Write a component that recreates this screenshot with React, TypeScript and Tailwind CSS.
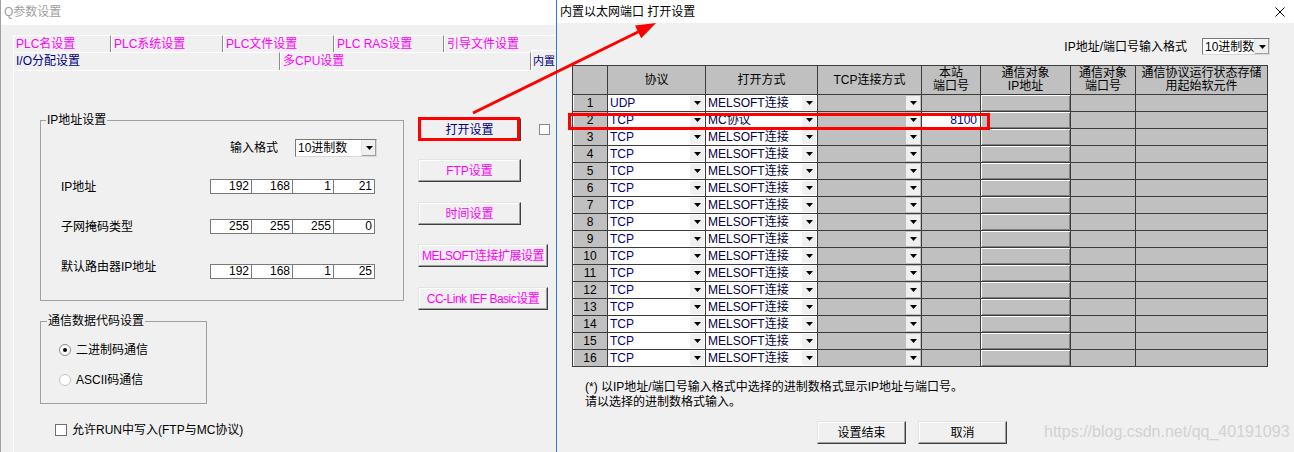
import React from "react";

// small black down-pointing triangle used by every combo box
function Caret() {
  return (
    <svg width="7" height="4" viewBox="0 0 7 4" className="block">
      <polygon points="0,0 7,0 3.5,4" fill="#000000" />
    </svg>
  );
}

function DropBtn() {
  return (
    <div className="mr-[1px] flex h-[14px] w-[14px] shrink-0 items-center justify-center bg-[#f0f0f0]">
      <Caret />
    </div>
  );
}

function Combo({ text, className }: { text: string; className: string }) {
  return (
    <div className={`flex items-center justify-between overflow-hidden whitespace-nowrap border border-[#7a7a7a] border-b-[#d8d8d8] border-r-[#d8d8d8] bg-white ${className}`}>
      <span className="pl-[2px] leading-[14px]">{text}</span>
      <div className="flex h-full w-[15px] shrink-0 items-center justify-center border-l border-[#e3e3e3] bg-[#f0f0f0] shadow-[inset_-1px_-1px_0_#a0a0a0]">
        <Caret />
      </div>
    </div>
  );
}

function WinButton({ label, wide, navy }: { label: string; wide?: boolean; navy?: boolean }) {
  return (
    <div
      className={`flex h-[23px] items-center justify-center whitespace-nowrap border border-[#e3e3e3] border-b-[#404040] border-r-[#404040] bg-[#f0f0f0] shadow-[inset_-1px_-1px_0_#a0a0a0,inset_1px_1px_0_#ffffff] ${
        wide ? "w-[130px] tracking-[-0.5px]" : "w-[103px]"
      } ${navy ? "text-[#000080]" : "text-[#ff00ff]"}`}
    >
      {label}
    </div>
  );
}

function IpBox({ parts }: { parts: string[] }) {
  return (
    <div className="flex h-[15px] w-[165px] border border-[#7a7a7a] bg-white">
      {parts.map((p, i) => (
        <div
          key={i}
          className={`pr-[2px] text-right leading-[13px] ${i > 0 ? "w-[41px] border-l border-[#7a7a7a]" : "w-[40px]"}`}
        >
          {p}
        </div>
      ))}
    </div>
  );
}

function CheckBox() {
  return <div className="h-[12px] w-[12px] shrink-0 border border-[#707070] bg-white" />;
}

function Radio({ checked }: { checked?: boolean }) {
  return (
    <div
      className={`flex h-[12px] w-[12px] shrink-0 items-center justify-center rounded-full border bg-white ${
        checked ? "border-[#8a8a8a]" : "border-[#c4c4c4]"
      }`}
    >
      {checked && <div className="h-[4px] w-[4px] rounded-full bg-black" />}
    </div>
  );
}

const tabsTop = [
  { label: "PLC名设置", w: "w-[98px]" },
  { label: "PLC系统设置", w: "w-[112px]" },
  { label: "PLC文件设置", w: "w-[111px]" },
  { label: "PLC RAS设置", w: "w-[110px]" },
  { label: "引导文件设置", w: "w-[120px]" },
];

const headers = [
  [""],
  ["协议"],
  ["打开方式"],
  ["TCP连接方式"],
  ["本站", "端口号"],
  ["通信对象", "IP地址"],
  ["通信对象", "端口号"],
  ["通信协议运行状态存储", "用起始软元件"],
];

const rows = Array.from({ length: 16 }, (_, i) => ({
  n: i + 1,
  proto: i === 0 ? "UDP" : "TCP",
  open: i === 1 ? "MC协议" : "MELSOFT连接",
  port: i === 1 ? "8100" : "",
}));

function LeftWindow() {
  return (
    <div className="flex h-full w-[556px] shrink-0 flex-col overflow-hidden border-l border-[#a0a0a0]">
      <div className="h-[25px] bg-white pl-[3px] pt-[5px] text-[#a0a0a0]">Q参数设置</div>

      <div className="flex flex-1 flex-col pl-[12px] pt-[10px]">
        {/* tab rows */}
        <div className="flex h-[17px]">
          {tabsTop.map((t) => (
            <div
              key={t.label}
              className={`${t.w} h-full shrink-0 whitespace-nowrap border-l border-r border-t border-white border-r-[#8c8c8c] pl-[2px] leading-[16px] text-[#ff00ff]`}
            >
              {t.label}
            </div>
          ))}
        </div>
        <div className="flex h-[18px]">
          <div className="h-full w-[267px] shrink-0 border-l border-r border-t border-white border-r-[#8c8c8c] pl-[2px] leading-[17px] text-[#000080]">
            I/O分配设置
          </div>
          <div className="h-full w-[251px] shrink-0 border-l border-r border-t border-white border-r-[#8c8c8c] pl-[2px] leading-[17px] text-[#ff00ff]">
            多CPU设置
          </div>
          <div className="relative z-10 -mt-[2px] h-[21px] w-[25px] shrink-0 whitespace-nowrap border-l border-t border-white bg-[#f0f0f0] pl-[1px] pt-[3px] text-[11px] text-[#000080]">
            内置
          </div>
        </div>

        {/* tab page */}
        <div className="flex flex-1 border-l border-t border-white">
          <div className="flex w-[390px] shrink-0 flex-col pl-[26px]">
            <fieldset className="mt-[42px] h-[188px] w-[364px] border border-[#a0a0a0]">
              <legend className="ml-[5px] px-[1px] leading-[14px]">IP地址设置</legend>
              <div className="mt-[12px] flex h-[18px] items-center pl-[189px]">
                <span className="w-[65px]">输入格式</span>
                <Combo text="10进制数" className="h-[18px] w-[82px]" />
              </div>
              <div className="mt-[21px] flex items-center pl-[20px]">
                <span className="w-[149px] pt-[2px]">IP地址</span>
                <IpBox parts={["192", "168", "1", "21"]} />
              </div>
              <div className="mt-[25px] flex items-center pl-[20px]">
                <span className="w-[149px] pt-[1px]">子网掩码类型</span>
                <IpBox parts={["255", "255", "255", "0"]} />
              </div>
              <div className="mt-[26px] flex items-center pl-[20px]">
                <span className="mb-[8px] w-[149px]">默认路由器IP地址</span>
                <IpBox parts={["192", "168", "1", "25"]} />
              </div>
            </fieldset>

            <fieldset className="mt-[13px] h-[90px] w-[167px] border border-[#a0a0a0]">
              <legend className="ml-[6px] px-[1px] leading-[14px]">通信数据代码设置</legend>
              <div className="mt-[15px] flex h-[14px] items-center gap-[5px] pl-[18px]">
                <Radio checked />
                <span>二进制码通信</span>
              </div>
              <div className="mt-[16px] flex h-[14px] items-center gap-[5px] pl-[18px]">
                <Radio />
                <span>ASCII码通信</span>
              </div>
            </fieldset>

            <div className="ml-[15px] mt-[19px] flex h-[14px] items-center gap-[5px]">
              <CheckBox />
              <span>允许RUN中写入(FTP与MC协议)</span>
            </div>
          </div>

          <div className="ml-[14px] flex flex-col pt-[47px]">
            <div className="flex items-center">
              <WinButton label="打开设置" navy />
              <div className="ml-[18px] h-[11px] w-[11px] border border-[#8a8a8a] bg-white" />
            </div>
            <div className="mt-[18px]">
              <WinButton label="FTP设置" />
            </div>
            <div className="mt-[20px]">
              <WinButton label="时间设置" />
            </div>
            <div className="mt-[19px]">
              <WinButton label="MELSOFT连接扩展设置" wide />
            </div>
            <div className="mt-[20px]">
              <WinButton label="CC-Link IEF Basic设置" wide />
            </div>
          </div>
        </div>
      </div>
    </div>
  );
}

function OpenSettingsDialog() {
  return (
    <div className="flex h-full flex-1 flex-col border-l border-[#2b7bd1] bg-[#f0f0f0]">
      <div className="flex h-[23px] items-center justify-between bg-white pl-[3px] pr-[9px]">
        <span>内置以太网端口 打开设置</span>
        <svg width="10" height="10" viewBox="0 0 10 10">
          <path d="M0.5 0.5 L9.5 9.5 M9.5 0.5 L0.5 9.5" stroke="#000000" strokeWidth="1" />
        </svg>
      </div>

      <div className="mt-[15px] flex items-center justify-end pr-[24px]">
        <span className="mr-[15px]">IP地址/端口号输入格式</span>
        <Combo text="10进制数" className="h-[17px] w-[68px]" />
      </div>

      <div className="ml-[15px] mt-[10px] grid w-[696px] grid-cols-[34px_97px_111px_103px_58px_89px_64px_131px] grid-rows-[28px_repeat(16,16px)] gap-px border border-[#3c3c3c] bg-[#3c3c3c]">
        {headers.map((h, i) => (
          <div key={i} className="flex flex-col items-center justify-center bg-[#c0c0c0] text-center leading-[13px]">
            {h.map((line, j) => (
              <span key={j}>{line}</span>
            ))}
          </div>
        ))}
        {rows.map((r) => (
          <React.Fragment key={r.n}>
            <div className="bg-[#c0c0c0] text-center leading-[16px] shadow-[inset_1px_0_0_#ffffff]">{r.n}</div>
            <div className="flex items-center justify-between bg-white pl-[2px] leading-[16px] text-[#000080]">
              <span>{r.proto}</span>
              <DropBtn />
            </div>
            <div className="flex items-center justify-between bg-white pl-[2px] leading-[16px] text-[#000040]">
              <span>{r.open}</span>
              <DropBtn />
            </div>
            <div className="flex items-center justify-end bg-[#c0c0c0]">
              <DropBtn />
            </div>
            <div className={r.port ? "bg-white pr-[3px] text-right leading-[16px] text-[#000080]" : "bg-[#c0c0c0]"}>{r.port}</div>
            <div className="bg-[#c0c0c0] shadow-[inset_1px_1px_0_#ffffff,inset_-1px_-1px_0_#808080]" />
            <div className="bg-[#c0c0c0]" />
            <div className="bg-[#c0c0c0]" />
          </React.Fragment>
        ))}
      </div>

      <div className="ml-[28px] mt-[13px] leading-[15px]">
        <div>(*) 以IP地址/端口号输入格式中选择的进制数格式显示IP地址与端口号。</div>
        <div>请以选择的进制数格式输入。</div>
      </div>

      <div className="ml-[260px] mt-[11px] flex gap-[12px]">
        <div className="flex h-[23px] w-[89px] items-center justify-center border border-[#e3e3e3] border-b-[#404040] border-r-[#404040] bg-[#f0f0f0] shadow-[inset_-1px_-1px_0_#a0a0a0,inset_1px_1px_0_#ffffff]">
          设置结束
        </div>
        <div className="flex h-[23px] w-[89px] items-center justify-center border border-[#e3e3e3] border-b-[#404040] border-r-[#404040] bg-[#f0f0f0] shadow-[inset_-1px_-1px_0_#a0a0a0,inset_1px_1px_0_#ffffff]">
          取消
        </div>
      </div>
    </div>
  );
}

export default function App() {
  return (
    <div className="relative flex h-[452px] w-[1294px] overflow-hidden bg-[#f0f0f0] font-['Liberation_Sans','Noto_Sans_CJK_SC',sans-serif] text-[12px] leading-[14px] text-black">
      <LeftWindow />
      <OpenSettingsDialog />

      {/* blog watermark over the screenshot */}
      <div className="pointer-events-none absolute left-[1044px] top-[422px] text-[16px] leading-[20px] text-[#d2d2d2]">
        https://blog.csdn.net/qq_40191093
      </div>

      {/* red annotation: boxes and arrow */}
      <svg className="pointer-events-none absolute left-0 top-0" width="1294" height="452" viewBox="0 0 1294 452">
        <rect x="419.5" y="118.5" width="99" height="21" fill="none" stroke="#ff0000" strokeWidth="3" />
        <rect x="569.5" y="114.5" width="419" height="14" fill="none" stroke="#ff0000" strokeWidth="3" />
        <line x1="473" y1="113" x2="640" y2="31" stroke="#ff0000" strokeWidth="3" />
        <polygon points="656,23 641.2,38.2 635,25.6" fill="#ff0000" />
      </svg>
    </div>
  );
}
